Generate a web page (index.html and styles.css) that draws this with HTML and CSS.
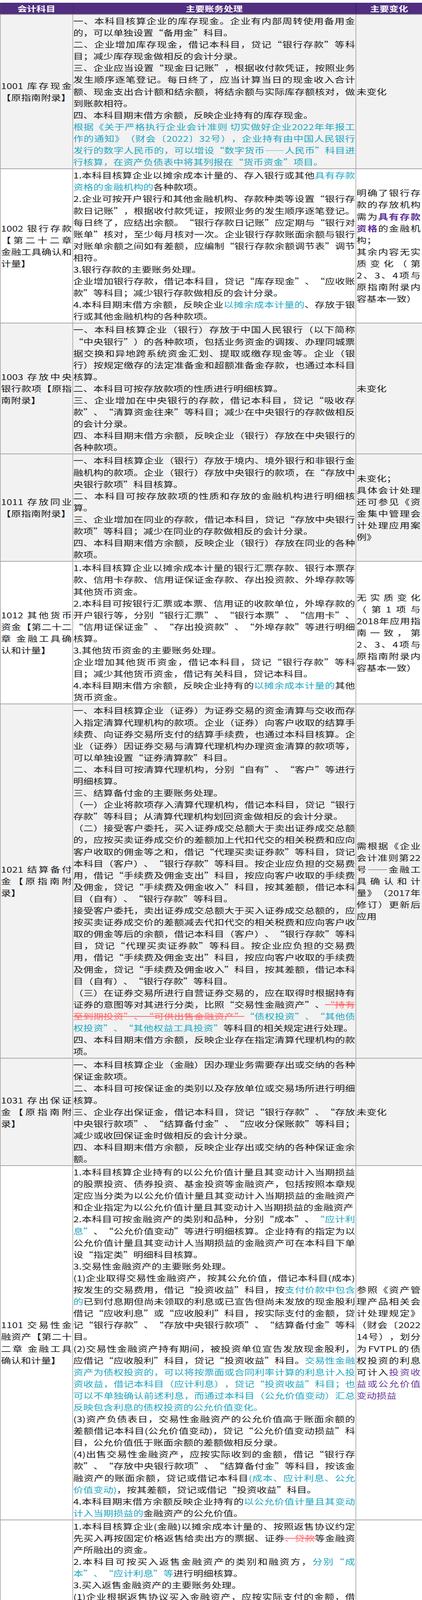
FILE: index.html
```html
<!DOCTYPE html>
<html lang="zh-CN">
<head>
<meta charset="utf-8">
<title>会计科目 主要账务处理 主要变化</title>
<link rel="stylesheet" href="styles.css">
</head>
<body>
<div class="page">
<table class="sheet">
<colgroup><col class="c1"><col class="c2"><col class="c3"></colgroup>
<thead>
<tr><th>会计科目</th><th>主要账务处理</th><th>主要变化</th></tr>
</thead>
<tbody>
<tr class="gray">
<td class="subj">1001 库存现金【原指南附录】</td>
<td class="proc">
<p>一、本科目核算企业的库存现金。企业有内部周转使用备用金的，可以单独设置“备用金”科目。</p>
<p>二、企业增加库存现金，借记本科目，贷记“银行存款”等科目；减少库存现金做相反的会计分录。</p>
<p>三、企业应当设置“现金日记账”，根据收付款凭证，按照业务发生顺序逐笔登记。每日终了，应当计算当日的现金收入合计额、现金支出合计额和结余额，将结余额与实际库存额核对，做到账款相符。</p>
<p>四、本科目期末借方余额，反映企业持有的库存现金。</p>
<p class="hl">根据《关于严格执行企业会计准则 切实做好企业2022年年报工作的通知》（财会〔2022〕32号），企业持有由中国人民银行发行的数字人民币的，可以增设“数字货币——人民币”科目进行核算，在资产负债表中将其列报在“货币资金”项目。</p>
</td>
<td class="chg">未变化</td>
</tr>
<tr>
<td class="subj">1002 银行存款【第二十二章 金融工具确认和计量】</td>
<td class="proc">
<p>1.本科目核算企业以摊余成本计量的、存入银行或其他<span class="hl">具有存款资格的金融机构的</span>各种款项。</p>
<p>2.企业可按开户银行和其他金融机构、存款种类等设置“银行存款日记账”，根据收付款凭证，按照业务的发生顺序逐笔登记。每日终了，应结出余额。“银行存款日记账”应定期与“银行对账单”核对，至少每月核对一次。企业银行存款账面余额与银行对账单余额之间如有差额，应编制“银行存款余额调节表”调节相符。</p>
<p>3.银行存款的主要账务处理。</p>
<p>企业增加银行存款，借记本科目，贷记“库存现金”、“应收账款”等科目；减少银行存款做相反的会计分录。</p>
<p>4.本科目期末借方余额，反映企业<span class="hl">以摊余成本计量的</span>、存放于银行或其他金融机构的各种款项。</p>
</td>
<td class="chg"><p>明确了银行存款的存放机构需为<strong class="em">具有存款资格</strong>的金融机构；</p><p>其余内容无实质变化（第2、3、4项与原指南附录内容基本一致）</p></td>
</tr>
<tr class="gray">
<td class="subj">1003 存放中央银行款项【原指南附录】</td>
<td class="proc">
<p>一、本科目核算企业（银行）存放于中国人民银行（以下简称“中央银行”）的各种款项，包括业务资金的调拨、办理同城票据交换和异地跨系统资金汇划、提取或缴存现金等。企业（银行）按规定缴存的法定准备金和超额准备金存款，也通过本科目核算。</p>
<p>二、本科目可按存放款项的性质进行明细核算。</p>
<p>三、企业增加在中央银行的存款，借记本科目，贷记“吸收存款”、“清算资金往来”等科目；减少在中央银行的存款做相反的会计分录。</p>
<p>四、本科目期末借方余额，反映企业（银行）存放在中央银行的各种款项。</p>
</td>
<td class="chg">未变化</td>
</tr>
<tr class="gray">
<td class="subj">1011 存放同业【原指南附录】</td>
<td class="proc">
<p>一、本科目核算企业（银行）存放于境内、境外银行和非银行金融机构的款项。企业（银行）存放中央银行的款项，在“存放中央银行款项”科目核算。</p>
<p>二、本科目可按存放款项的性质和存放的金融机构进行明细核算。</p>
<p>三、企业增加在同业的存款，借记本科目，贷记“存放中央银行款项”等科目；减少在同业的存款做相反的会计分录。</p>
<p>四、本科目期末借方余额，反映企业（银行）存放在同业的各种款项。</p>
</td>
<td class="chg"><p>未变化；</p><p>具体会计处理还可参见《资金集中管理会计处理应用案例》</p></td>
</tr>
<tr>
<td class="subj">1012 其他货币资金【第二十二章 金融工具确认和计量】</td>
<td class="proc">
<p>1.本科目核算企业以摊余成本计量的银行汇票存款、银行本票存款、信用卡存款、信用证保证金存款、存出投资款、外埠存款等其他货币资金。</p>
<p>2.本科目可按银行汇票或本票、信用证的收款单位，外埠存款的开户银行等，分别“银行汇票”、“银行本票”、“信用卡”、“信用证保证金”、“存出投资款”、“外埠存款”等进行明细核算。</p>
<p>3.其他货币资金的主要账务处理。</p>
<p>企业增加其他货币资金，借记本科目，贷记“银行存款”等科目；减少其他货币资金，借记有关科目，贷记本科目。</p>
<p>4.本科目期末借方余额，反映企业持有的<span class="hl">以摊余成本计量的</span>其他货币资金。</p>
</td>
<td class="chg">无实质变化（第1项与2018年应用指南一致，第2、3、4项与原指南附录内容基本一致）</td>
</tr>
<tr class="gray">
<td class="subj">1021 结算备付金【原指南附录】</td>
<td class="proc">
<p>一、本科目核算企业（证券）为证券交易的资金清算与交收而存入指定清算代理机构的款项。企业（证券）向客户收取的结算手续费、向证券交易所支付的结算手续费，也通过本科目核算。企业（证券）因证券交易与清算代理机构办理资金清算的款项等，可以单独设置“证券清算款”科目。</p>
<p>二、本科目可按清算代理机构，分别“自有”、“客户”等进行明细核算。</p>
<p>三、结算备付金的主要账务处理。</p>
<p>（一）企业将款项存入清算代理机构，借记本科目，贷记“银行存款”等科目；从清算代理机构划回资金做相反的会计分录。</p>
<p>（二）接受客户委托，买入证券成交总额大于卖出证券成交总额的，应按买卖证券成交价的差额加上代扣代交的相关税费和应向客户收取的佣金等之和，借记“代理买卖证券款”等科目，贷记本科目（客户）、“银行存款”等科目。按企业应负担的交易费用，借记“手续费及佣金支出”科目，按应向客户收取的手续费及佣金，贷记“手续费及佣金收入”科目，按其差额，借记本科目（自有）、“银行存款”等科目。</p>
<p>接受客户委托，卖出证券成交总额大于买入证券成交总额的，应按买卖证券成交价的差额减去代扣代交的相关税费和应向客户收取的佣金等后的余额，借记本科目（客户）、“银行存款”等科目，贷记“代理买卖证券款”等科目。按企业应负担的交易费用，借记“手续费及佣金支出”科目，按应向客户收取的手续费及佣金，贷记“手续费及佣金收入”科目，按其差额，借记本科目（自有）、“银行存款”等科目。</p>
<p>（三）在证券交易所进行自营证券交易的，应在取得时根据持有证券的意图等对其进行分类，比照“交易性金融资产”、<del class="del">“持有至到期投资”、“可供出售金融资产”</del><span class="hl">“债权投资”、“其他债权投资”、“其他权益工具投资”</span>等科目的相关规定进行处理。</p>
<p>四、本科目期末借方余额，反映企业存在指定清算代理机构的款项。</p>
</td>
<td class="chg">需根据《企业会计准则第22号——金融工具确认和计量》（2017年修订）更新后应用</td>
</tr>
<tr class="gray">
<td class="subj">1031 存出保证金【原指南附录】</td>
<td class="proc">
<p>一、本科目核算企业（金融）因办理业务需要存出或交纳的各种保证金款项。</p>
<p>二、本科目可按保证金的类别以及存放单位或交易场所进行明细核算。</p>
<p>三、企业存出保证金，借记本科目，贷记“银行存款”、“存放中央银行款项”、“结算备付金”、“应收分保账款”等科目；减少或收回保证金时做相反的会计分录。</p>
<p>四、本科目期末借方余额，反映企业存出或交纳的各种保证金余额。</p>
</td>
<td class="chg">未变化</td>
</tr>
<tr>
<td class="subj">1101 交易性金融资产【第二十二章 金融工具确认和计量】</td>
<td class="proc">
<p>1.本科目核算企业持有的以公允价值计量且其变动计入当期损益的股票投资、债券投资、基金投资等金融资产，包括按照本章规定应当分类为以公允价值计量且其变动计入当期损益的金融资产和企业指定为以公允价值计量且其变动计入当期损益的金融资产</p>
<p>2.本科目可按金融资产的类别和品种，分别“成本”、<span class="hl">“应计利息”</span>、“公允价值变动”等进行明细核算。企业持有的指定为以公允价值计量且其变动计人当期损益的金融资产可在本科目下单设“指定类”明细科目核算。</p>
<p>3.交易性金融资产的主要账务处理。</p>
<p>(1)企业取得交易性金融资产，按其公允价值，借记本科目(成本)按发生的交易费用，借记“投资收益”科目，按<span class="hl">支付价款中包含的</span>已到付息期但尚未领取的利息或已宣告但尚未发放的现金股利借记“应收利息”或“应收股利”科目，按实际支付的金额，贷记“银行存款”、“存放中央银行款项”、“结算备付金”等科目。</p>
<p>(2)交易性金融资产持有期间，被投资单位宣告发放现金股利，应借记“应收股利”科目，贷记“投资收益”科目。<span class="hl">交易性金融资产为债权投资的，可以将按票面或合同利率计算的利息计入投资收益，借记本科目（应计利息），贷记“投资收益”科目；也可以不单独确认前述利息，而通过本科目（公允价值变动）汇总反映包含利息的债权投资的公允价值变化。</span></p>
<p>(3)资产负债表日，交易性金融资产的公允价值高于账面余额的差额借记本科目(公允价值变动)，贷记“公允价值变动损益”科目，公允价值低于账面余额的差额做相反分录。</p>
<p>(4)出售交易性金融资产，应按实际收到的金额，借记“银行存款”、“存放中央银行款项”、“结算备付金”等科目，按该金融资产的账面余额，贷记或借记本科目<span class="hl">(成本、应计利息、公允价值变动)</span>，按其差额，贷记或借记“投资收益”科目。</p>
<p>4.本科目期末借方余额反映企业持有的<span class="hl">以公允价值计量且其变动计入当期损益的</span>金融资产的公允价值。</p>
</td>
<td class="chg">参照《资产管理产品相关会计处理规定》（财会〔2022<wbr>14号），划分为FVTPL的债权投资的利息可计入<span class="em">投资收益或公允价值变动损益</span></td>
</tr>
<tr>
<td class="subj">1111 买入返售金融资产【第二十二章 金融工具确认和计量】</td>
<td class="proc">
<p>1.本科目核算企业(金融)以摊余成本计量的、按照返售协议约定先买入再按固定价格返售给卖出方的票据、证券<del class="del">、贷款</del>等金融资产所融出的资金。</p>
<p>2.本科目可按买入返售金融资产的类别和融资方，<span class="hl">分别“成本”、“应计利息”等</span>进行明细核算。</p>
<p>3.买入返售金融资产的主要账务处理。</p>
<p>(1)企业根据返售协议买入金融资产，应按实际支付的金额，借记本科目(成本)，贷记“银行存款”、“存放中央银行款项”、“结算备付金”等科目。</p>
<p>(2)资产负债表日，按照实际利率法计算的利息收入，借记本科目<span class="hl">(应计利息)</span>，贷记“利息收入”科目。</p>
<p class="hl">资产负债表日，应以预期信用损失为基础确定应计提的减值准备金额，该金额大于当前减值准备账面金额的，按其差额，借记“信用减值损失”科目，贷记“买入返售金融资产减值准备”科目。应计提的减值准备金额小于当前减值准备账面金额的，按其差额做相反分录。</p>
<p>(3)返售日，应按实际收到的金额，借记“银行存款”、“存放中央银行款项”、“结算备付金”等科目，<span class="hl">按相关减值准备余额，借记“买入返售金融资产减值准备”科目，</span>按其账面余额，贷记本科目<span class="hl">(成本、应计利息)</span>，按其差额，<del class="del">贷记“利息收入”科目</del><span class="hl">贷记或借记“信用减值损失”科目。</span></p>
<p>4.本科目期末借方余额反映企业持有的<span class="hl">以摊余成本计量的</span>买入返售金融资产的账面余额。</p>
</td>
<td class="chg"><p>删除了抵质押举例中的“贷款”；</p><p>增加了“信用减值损失”计提、转回、结转的账务处理</p></td>
</tr>
<tr class="lav">
<td class="subj">1112 买入返售金融资产减值准备【《资产管理产品相关会计处理规定》】</td>
<td class="proc">
<p>1.本科目核算资产管理产品持有的以摊余成本计量的买入返售金融资产以预期信用损失为基础计提的损失准备。</p>
<p>2.本科目可按买入返售金融资产的类别和融资方进行明细核算。</p>
<p>3.买入返售金融资产减值准备的主要账务处理参见“买入返售金融资产”科目的账务处理。</p>
<p>4.本科目期末贷方余额反映以摊余成本计量的买入返售金融资产计提的损失准备余额。</p>
</td>
<td class="chg">适用于企业(金融）持有的以摊余成本计量的买入返售金融资产预期信用损失的计提</td>
</tr>
</tbody>
</table>
</div>
</body>
</html>
```
FILE: styles.css
```css
html, body {
  margin: 0;
  padding: 0;
  background: #ffffff;
}

.page {
  padding-top: 7px;
}

.sheet {
  width: 843.75px;
  table-layout: fixed;
  border-collapse: collapse;
  transform: scaleX(1.28);
  transform-origin: 0 0;
  font-family: "Noto Sans CJK SC", sans-serif;
  font-size: 20px;
  line-height: 30.1px;
  color: #1c1c1c;
  text-spacing-trim: space-all;
}

.c1 { width: 144.5px; }
.c2 { width: 566.45px; }
.c3 { width: 132.8px; }

.sheet th {
  background: #512e80;
  color: #ffffff;
  font-weight: bold;
  font-size: 19px;
  line-height: 29px;
  height: 29px;
  padding: 0;
  text-align: center;
  border-left: 1px solid #2e1a4a;
  border-right: 1px solid #2e1a4a;
  border-bottom: 2px solid #a0a0a0;
}

.sheet td {
  padding: 1px;
  border-left: 1px solid #8c8c8c;
  border-right: 1px solid #8c8c8c;
  border-bottom: 2px solid #a8a8a8;
  text-align: justify;
  vertical-align: middle;
  background: #ffffff;
}

.sheet tr.gray td { background: #f2f2f2; }
.sheet tr.lav td { background: #dfdbec; }
.sheet td.chg { padding-right: 3px; }
.sheet p { margin: 0; }

.hl { color: #1fa8c3; }

.del {
  color: #ff6a6a;
  text-decoration: line-through;
  text-decoration-color: #ff6a6a;
}

.em { color: #6b3a9c; font-weight: normal; }
strong.em { font-weight: bold; color: #5d2f94; }
```
